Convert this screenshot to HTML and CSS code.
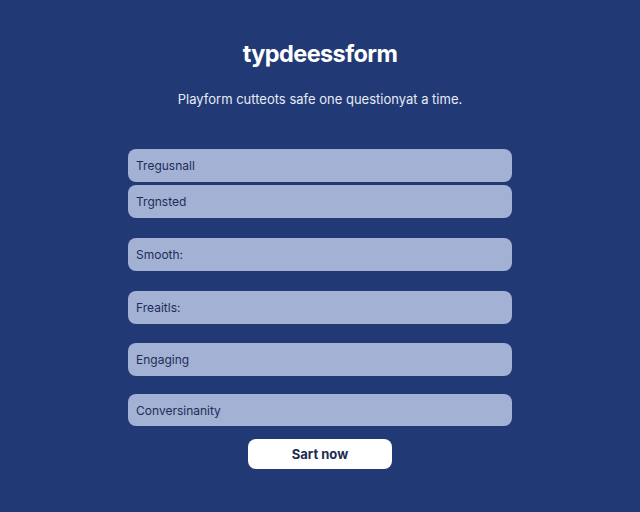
FILE: index.html
```html
<!DOCTYPE html>
<html>
<head>
<meta charset="utf-8">
<link rel="stylesheet" href="styles.css">
</head>
<body>
<main class="page">
  <h1 class="title">typdeessform</h1>
  <p class="subtitle">Playform cutteots safe one questionyat a time.</p>
  <div class="fields">
    <div class="field">Tregusnall</div>
    <div class="field tight">Trgnsted</div>
    <div class="field">Smooth:</div>
    <div class="field">Freaitls:</div>
    <div class="field gap19">Engaging</div>
    <div class="field gap18">Conversinanity</div>
  </div>
  <button class="start">Sart now</button>
</main>
</body>
</html>
```

FILE: styles.css
```css
html, body {
  margin: 0;
  padding: 0;
  height: 100%;
}
body {
  background: #213a76;
  font-family: "Inter", "Liberation Sans", sans-serif;
}
.page {
  width: 384px;
  margin: 0 auto;
  display: flex;
  flex-direction: column;
  align-items: center;
  padding-top: 39px;
}
.title {
  margin: 0;
  font-size: 23.5px;
  line-height: 30px;
  font-weight: 700;
  color: #ffffff;
  letter-spacing: -0.6px;
}
.subtitle {
  margin: 20px 0 0;
  font-size: 13px;
  line-height: 20px;
  color: #e6ebf5;
  white-space: nowrap;
}
.fields {
  width: 100%;
  margin-top: 40px;
  display: flex;
  flex-direction: column;
}
.field {
  height: 33px;
  box-sizing: border-box;
  background: #a2b1d4;
  border-radius: 8px;
  padding-left: 8px;
  display: flex;
  align-items: center;
  font-size: 12px;
  color: #1e2d58;
  margin-top: 20px;
}
.field:first-child {
  margin-top: 0;
}
.field.tight {
  margin-top: 3px;
}
.field.gap19 {
  margin-top: 19px;
}
.field.gap18 {
  margin-top: 18px;
  height: 32px;
}
.start {
  margin-top: 13px;
  width: 144px;
  height: 30px;
  border: none;
  border-radius: 8px;
  background: #ffffff;
  color: #1d2b52;
  font-family: "Inter", "Liberation Sans", sans-serif;
  font-size: 13px;
  font-weight: 700;
}
```
